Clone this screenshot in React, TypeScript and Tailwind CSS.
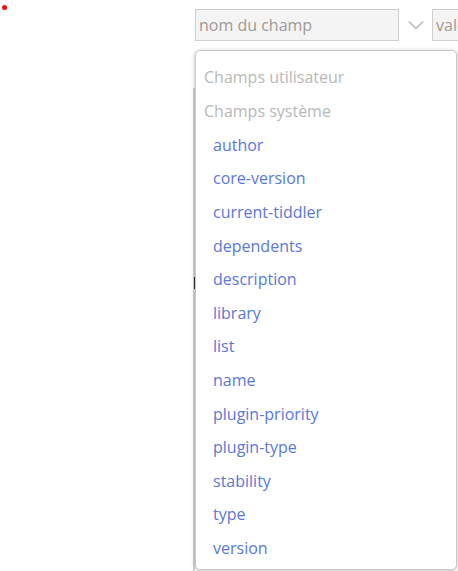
import React from 'react';

const systemFields = [
  'author',
  'core-version',
  'current-tiddler',
  'dependents',
  'description',
  'library',
  'list',
  'name',
  'plugin-priority',
  'plugin-type',
  'stability',
  'type',
  'version',
];

const Chevron = () => (
  <svg width="16" height="10" viewBox="0 0 16 10" fill="none">
    <path d="M1 1.5 L8 8.5 L15 1.5" stroke="#b5b5b5" strokeWidth="1.4" />
  </svg>
);

export default function App() {
  return (
    <div
      className="relative w-[458px] h-[571px] overflow-hidden bg-white"
      style={{ fontFamily: '"Open Sans", "Noto Sans", sans-serif' }}
    >
      {/* unsaved marker */}
      <span className="absolute left-[2px] top-[5px] w-[5px] h-[5px] rounded-full bg-[#ee1111]" />

      {/* field row */}
      <div className="flex items-center pt-[9px] pl-[195px]">
        <div className="w-[204px] h-[32px] shrink-0 border border-[#cfcfcf] bg-[#f4f4f4] flex items-center px-[3px] text-[16px] text-[#a09a94]">
          nom du champ
        </div>
        <div className="w-[33px] shrink-0 flex justify-center">
          <Chevron />
        </div>
        <div className="w-[60px] h-[32px] shrink-0 border border-[#cfcfcf] bg-[#f4f4f4] flex items-center px-[3px] text-[16px] text-[#a09a94]">
          valeur
        </div>
      </div>

      {/* content under the popup */}
      <div className="absolute left-[193px] top-[88px] w-[2px] h-[483px] bg-[#d3d3d3]" />
      <div className="absolute left-[194px] top-[277px] w-[2px] h-[12px] bg-[#333]" />

      {/* dropdown */}
      <div className="absolute left-[195px] top-[50px] w-[262px] h-[520px] rounded-[5px] border border-[#c8c8c8] bg-white shadow-[0_1px_4px_rgba(0,0,0,0.25)] overflow-hidden">
        <div className="pt-[8px]">
          <div className="h-[35px] flex items-center pl-[8px] text-[16px] text-[#b8b8b8]">Champs utilisateur</div>
          <div className="h-[34px] flex items-center pl-[8px] text-[16px] text-[#b8b8b8]">Champs système</div>
          {systemFields.map((f) => (
            <div key={f} className="h-[33.6px] flex items-center pl-[17px] text-[16px] text-[#5b78d6]">
              {f}
            </div>
          ))}
        </div>
      </div>
    </div>
  );
}
